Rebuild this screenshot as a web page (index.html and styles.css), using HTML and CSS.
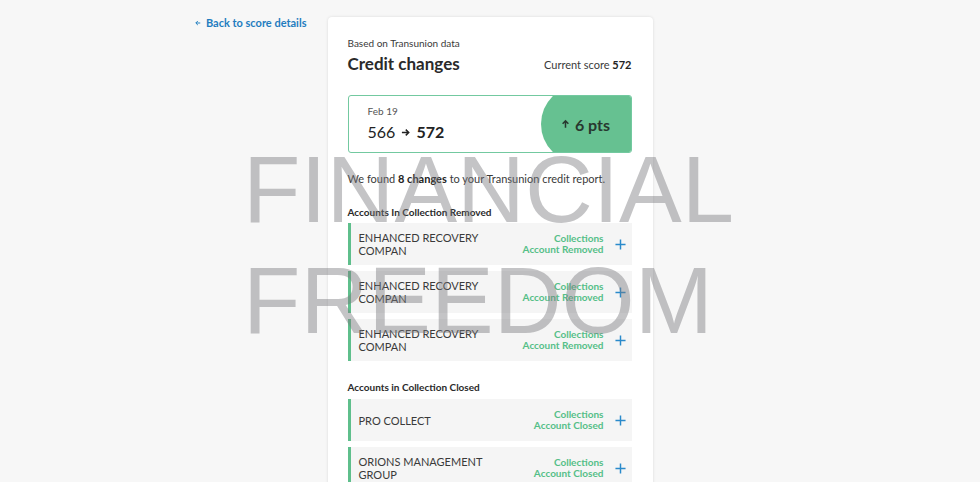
FILE: index.html
```html
<!DOCTYPE html>
<html lang="en">
<head>
    <meta charset="UTF-8">
    <meta name="viewport" content="width=device-width, initial-scale=1.0">
    <title>Credit changes</title>
    <link rel="stylesheet" href="styles.css">
</head>
<body>
    <div class="page">
        <a class="back-link" href="#">
            <svg class="back-arrow" viewBox="0 0 8 8" width="6" height="6"><path d="M7 4H1.2M3.8 1.3 1.1 4l2.7 2.7" fill="none" stroke="currentColor" stroke-width="1.3"/></svg>
            Back to score details
        </a>

        <main class="card">
            <p class="source">Based on Transunion data</p>
            <div class="card-head">
                <h1>Credit changes</h1>
                <span class="current">Current score <b>572</b></span>
            </div>

            <!-- Score movement -->
            <div class="score-box">
                <div class="score-info">
                    <span class="score-date">Feb 19</span>
                    <span class="score-values">566 <svg class="small-arrow" viewBox="0 0 10 10" width="9" height="9"><path d="M1 5h7.4M5.3 1.8 8.6 5 5.3 8.2" fill="none" stroke="currentColor" stroke-width="1.6"/></svg> <b>572</b></span>
                </div>
                <div class="score-delta">
                    <svg class="up-arrow" viewBox="0 0 10 10" width="9" height="10"><path d="M5 9.2V1.6M1.8 4.7 5 1.5l3.2 3.2" fill="none" stroke="currentColor" stroke-width="1.7"/></svg>
                    6 pts
                </div>
            </div>

            <p class="summary">We found <b>8 changes</b> to your Transunion credit report.</p>

            <section class="group">
                <h2>Accounts In Collection Removed</h2>
                <ul class="changes">
                    <li class="change">
                        <span class="change-name">Enhanced Recovery Compan</span>
                        <span class="change-status">Collections<br>Account Removed</span>
                        <svg class="plus" viewBox="0 0 12 12" width="11" height="11"><path d="M6 .5v11M.5 6h11" stroke="currentColor" stroke-width="1.6"/></svg>
                    </li>
                    <li class="change">
                        <span class="change-name">Enhanced Recovery Compan</span>
                        <span class="change-status">Collections<br>Account Removed</span>
                        <svg class="plus" viewBox="0 0 12 12" width="11" height="11"><path d="M6 .5v11M.5 6h11" stroke="currentColor" stroke-width="1.6"/></svg>
                    </li>
                    <li class="change">
                        <span class="change-name">Enhanced Recovery Compan</span>
                        <span class="change-status">Collections<br>Account Removed</span>
                        <svg class="plus" viewBox="0 0 12 12" width="11" height="11"><path d="M6 .5v11M.5 6h11" stroke="currentColor" stroke-width="1.6"/></svg>
                    </li>
                </ul>
            </section>

            <section class="group">
                <h2 class="group-gap">Accounts in Collection Closed</h2>
                <ul class="changes">
                    <li class="change">
                        <span class="change-name">Pro Collect</span>
                        <span class="change-status">Collections<br>Account Closed</span>
                        <svg class="plus" viewBox="0 0 12 12" width="11" height="11"><path d="M6 .5v11M.5 6h11" stroke="currentColor" stroke-width="1.6"/></svg>
                    </li>
                    <li class="change">
                        <span class="change-name">Orions Management Group</span>
                        <span class="change-status">Collections<br>Account Closed</span>
                        <svg class="plus" viewBox="0 0 12 12" width="11" height="11"><path d="M6 .5v11M.5 6h11" stroke="currentColor" stroke-width="1.6"/></svg>
                    </li>
                </ul>
            </section>
        </main>
    </div>

    <!-- Watermark over the screenshot -->
    <div class="watermark">FINANCIAL<br>FREEDOM</div>
</body>
</html>
```

FILE: styles.css
```css
body {
    margin: 0;
    height: 482px;
    overflow: hidden;
    position: relative;
    background: #f7f7f7;
    font-family: 'Lato', 'Noto Sans', sans-serif;
    color: #2d2d2d;
}

.page {
    display: grid;
    grid-template-columns: 1fr 325px 1fr;
    align-items: start;
    padding-top: 17px;
}

.back-link {
    justify-self: end;
    margin-right: 21px;
    display: flex;
    align-items: center;
    gap: 5px;
    font-size: 11px;
    line-height: 12px;
    font-weight: 700;
    color: #1f7dbf;
    text-decoration: none;
}

.card {
    background: #fff;
    border-radius: 4px;
    box-shadow: 0 0 3px rgba(0, 0, 0, 0.12);
    padding: 20px 21px 40px 20px;
    min-height: 600px;
}

.source {
    margin: 0;
    font-size: 10px;
    line-height: 12px;
    color: #3a3a3a;
}

.card-head {
    display: flex;
    justify-content: space-between;
    align-items: center;
    margin-top: 3px;
    height: 24px;
}

    .card-head h1 {
        margin: 0;
        font-size: 17px;
        line-height: 24px;
        font-weight: 700;
        color: #2a2a2a;
    }

.current {
    font-size: 11px;
    color: #3a3a3a;
}

    .current b {
        color: #222;
    }

/* Score box */
.score-box {
    display: flex;
    margin-top: 19px;
    height: 58px;
    box-sizing: border-box;
    border: 1px solid #73c9a0;
    border-radius: 3px;
    overflow: hidden;
}

.score-info {
    flex: 1;
    display: flex;
    flex-direction: column;
    padding: 9px 0 0 19px;
}

.score-date {
    font-size: 10px;
    line-height: 12px;
    color: #555;
}

.score-values {
    margin-top: 6px;
    font-size: 16px;
    line-height: 18px;
    color: #222;
}

    .score-values b {
        font-weight: 700;
    }

.small-arrow {
    margin: 0 2px;
    vertical-align: 1px;
}

.score-delta {
    flex: 0 0 90px;
    margin: -11px 0;
    border-radius: 39px 0 0 39px;
    background: #66c191;
    display: flex;
    align-items: center;
    justify-content: center;
    gap: 5px;
    font-size: 16px;
    font-weight: 700;
    color: #28382f;
}

.summary {
    margin: 19px 0 0;
    font-size: 11px;
    line-height: 14px;
    color: #3a3a3a;
}

    .summary b {
        color: #222;
    }

/* Change groups */
.group h2 {
    margin: 20px 0 5px;
    font-size: 10px;
    line-height: 12px;
    font-weight: 700;
    color: #2a2a2a;
}

    .group h2.group-gap {
        margin: 20px 0 6px;
    }

.changes {
    list-style: none;
    margin: 0;
    padding: 0;
    display: flex;
    flex-direction: column;
    gap: 6px;
}

.change {
    display: flex;
    align-items: center;
    height: 42px;
    box-sizing: border-box;
    padding: 0 6px 0 8px;
    border-left: 3px solid #5fbf8c;
    background: #f5f5f5;
}

.change-name {
    flex: 1;
    max-width: 135px;
    margin-right: auto;
    font-size: 11px;
    line-height: 13px;
    text-transform: uppercase;
    color: #3a3a3a;
}

.change-status {
    text-align: right;
    font-size: 10px;
    line-height: 11px;
    font-weight: 700;
    color: #55bf88;
}

.plus {
    margin-left: 11px;
    color: #2a8acb;
}

/* Watermark */
.watermark {
    position: absolute;
    left: 243px;
    top: 134px;
    font-family: 'Liberation Sans', Arial, sans-serif;
    font-size: 94px;
    line-height: 111px;
    color: rgba(120, 120, 126, 0.44);
    pointer-events: none;
}
```
